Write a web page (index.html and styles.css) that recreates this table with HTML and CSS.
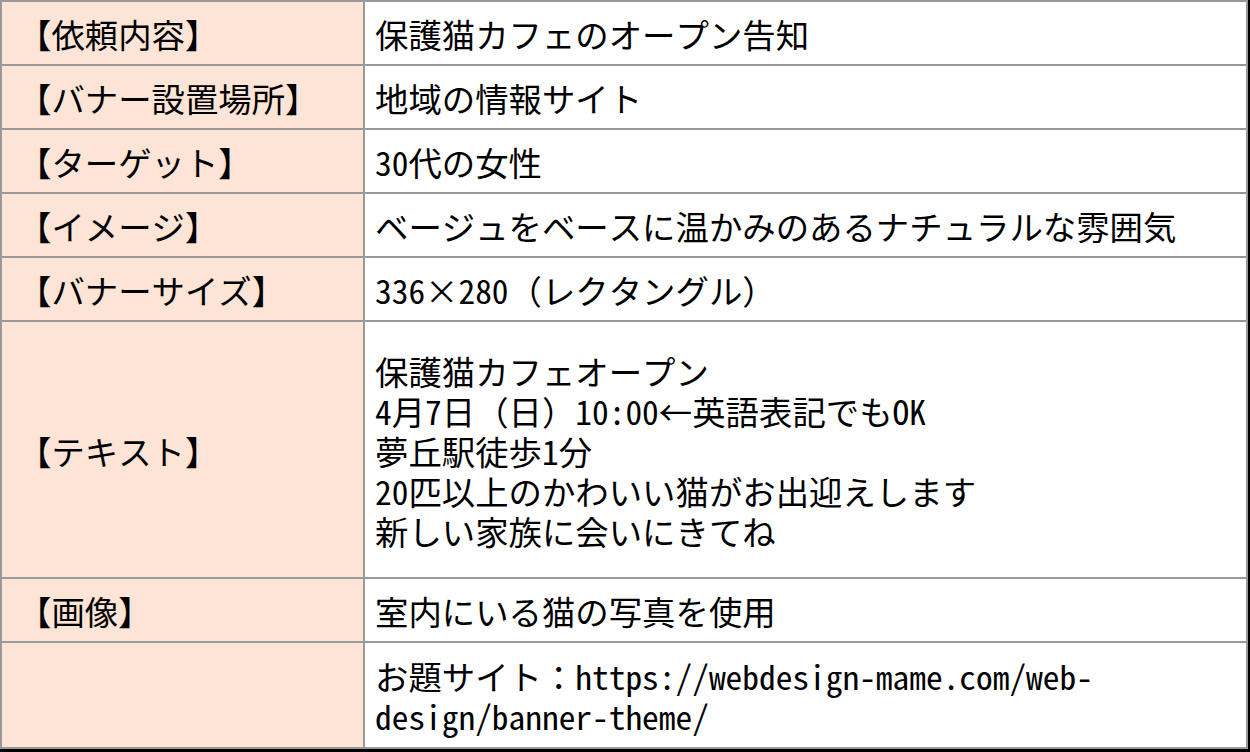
FILE: index.html
```html
<!DOCTYPE html>
<html lang="ja">
<head>
<meta charset="utf-8">
<link rel="stylesheet" href="styles.css">
</head>
<body>
<table class="spec">
  <tr class="r">
    <th>【依頼内容】</th>
    <td>保護猫カフェのオープン告知</td>
  </tr>
  <tr class="r">
    <th>【バナー設置場所】</th>
    <td>地域の情報サイト</td>
  </tr>
  <tr class="r">
    <th>【ターゲット】</th>
    <td>30代の女性</td>
  </tr>
  <tr class="r">
    <th>【イメージ】</th>
    <td>ベージュをベースに温かみのあるナチュラルな雰囲気</td>
  </tr>
  <tr class="r">
    <th>【バナーサイズ】</th>
    <td>336×280（レクタングル）</td>
  </tr>
  <tr class="r-text">
    <th>【テキスト】</th>
    <td>保護猫カフェオープン<br>4月7日（日）10:00←英語表記でもOK<br>夢丘駅徒歩1分<br>20匹以上のかわいい猫がお出迎えします<br>新しい家族に会いにきてね</td>
  </tr>
  <tr class="r">
    <th>【画像】</th>
    <td>室内にいる猫の写真を使用</td>
  </tr>
  <tr class="r-last">
    <th></th>
    <td>お題サイト：https://webdesign-mame.com/web-<br>design/banner-theme/</td>
  </tr>
</table>
</body>
</html>
```

FILE: styles.css
```css
html, body {
  margin: 0;
  padding: 0;
  background: #000;
}
body {
  width: 1250px;
  height: 752px;
  overflow: hidden;
}
.spec {
  border-collapse: collapse;
  width: 1248px;
  table-layout: fixed;
  background: #fff;
  font-family: "Noto Sans Mono CJK JP", "Noto Sans CJK JP", sans-serif;
  font-size: 33.4px;
  line-height: 40px;
  color: #000;
}
.spec th,
.spec td {
  border: 2px solid #999;
  padding: 2px 10px 0;
  vertical-align: middle;
  text-align: left;
  font-weight: normal;
  white-space: nowrap;
}
.spec th {
  width: 335px;
  background: #fce4d6;
  padding-left: 16px;
}
.r { height: 64px; }
.r-text { height: 257px; }
.r-last { height: 106px; }
```
